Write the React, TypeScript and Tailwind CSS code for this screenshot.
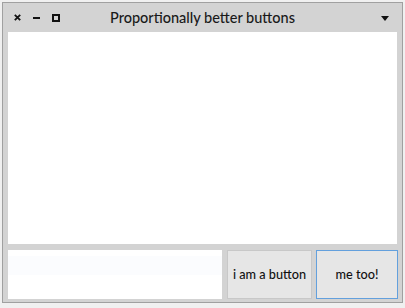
export default function App() {
  return (
    <div className="h-[308px] w-[405px] bg-[#f0f0f0] pl-[2px] pt-[2px] font-['Lato','Noto_Sans',sans-serif]">
      <div className="flex h-[301px] w-[401px] flex-col border border-[#a0a0a0] bg-[#d3d3d3]">
        <div className="relative flex h-[29px] shrink-0 items-center">
          <div className="flex items-center gap-[12px] pl-[11px]">
            <svg width="7" height="7" viewBox="0 0 7 7">
              <path d="M0.8 0.8L6.2 6.2M6.2 0.8L0.8 6.2" stroke="#111" strokeWidth="1.8" />
            </svg>
            <div className="h-[2px] w-[7px] bg-[#111]" />
            <div className="h-[8px] w-[8px] border-2 border-[#111]" />
          </div>
          <span className="absolute left-0 right-0 text-center text-[14.5px] font-medium text-[#1a1a1a]">
            Proportionally better buttons
          </span>
          <svg className="absolute right-[13px] top-[13px]" width="8" height="5" viewBox="0 0 8 5">
            <path d="M0 0H8L4 5Z" fill="#111" />
          </svg>
        </div>
        <div className="flex flex-1 flex-col pb-[4px] pl-[5px]">
          <div className="h-[212px] w-[389px] bg-white" />
          <div className="mt-[6px] flex h-[49px] gap-[5px]">
            <div className="flex w-[214px] flex-col bg-white pt-[6px]">
              <div className="h-[19px] bg-[#fbfcfe]" />
            </div>
            <button className="w-[85px] border border-[#c8c8c8] bg-[#e6e6e6] text-[12.7px] font-medium text-[#111]">
              i am a button
            </button>
            <button className="ml-[-1px] w-[82px] border border-[#63a0dd] bg-[#e6e6e6] text-[12.7px] font-medium text-[#111]">
              me too!
            </button>
          </div>
        </div>
      </div>
    </div>
  );
}
